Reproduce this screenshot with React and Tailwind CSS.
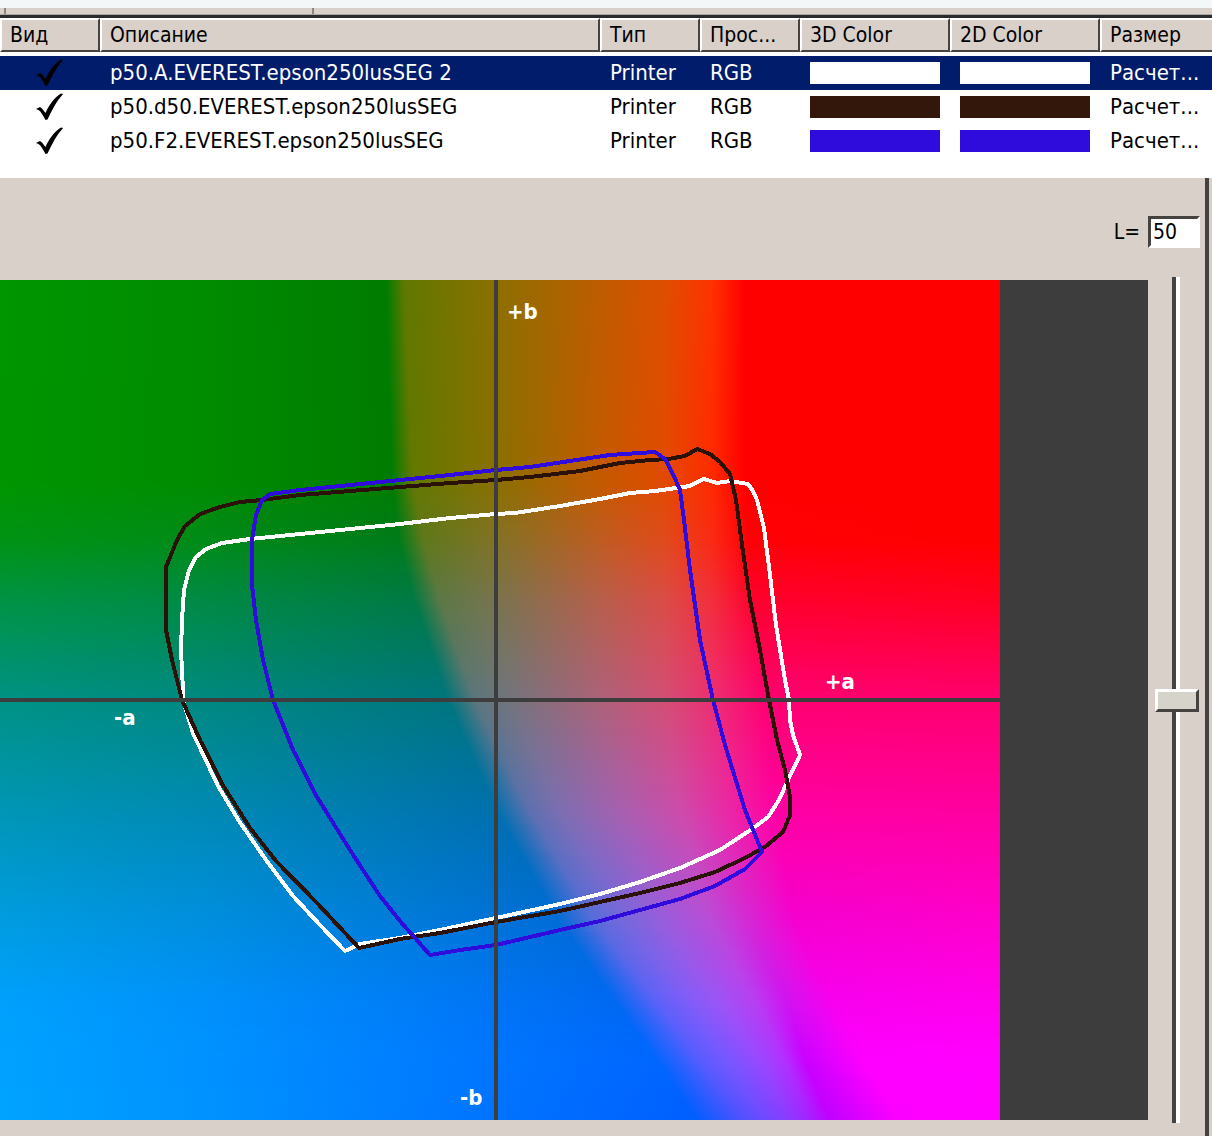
import React, { useState } from 'react';

const profiles = [
  {
    id: 'a',
    name: 'p50.A.EVEREST.epson250lusSEG 2',
    type: 'Printer',
    space: 'RGB',
    swatch: 'bg-white',
    stroke: '#ffffff',
    size: 'Расчет...',
    points:
      '183,700 183,690 181,650 182,620 184,590 189,570 196,557 206,549 222,543 250,539 300,534 350,529 400,524 450,518 496,514 515,513 560,506 600,499 630,493 655,491 690,486 697,482 704,479 717,483 730,481 748,484 753,491 757,500 764,528 770,575 776,625 785,680 789,700 790,720 793,735 800,755 788,780 779,800 768,817 752,829 720,850 680,868 640,882 600,894 560,904 496,918 440,930 400,938 360,944 345,951 320,925 293,896 266,860 239,821 218,786 193,733',
  },
  {
    id: 'd50',
    name: 'p50.d50.EVEREST.epson250lusSEG',
    type: 'Printer',
    space: 'RGB',
    swatch: 'bg-[#33170a]',
    stroke: '#2a1208',
    size: 'Расчет...',
    points:
      '182,700 172,660 166,630 166,567 177,540 185,526 200,514 220,507 240,502 262,500 300,495 350,491 400,487 450,483 496,480 530,477 580,471 620,463 650,460 668,459 685,456 697,449 710,454 720,462 730,474 736,500 742,545 750,600 760,650 768,695 777,740 785,770 790,797 790,815 783,832 766,846 745,858 715,872 680,883 640,893 600,902 560,911 496,922 440,933 400,939 359,948 317,903 276,861 250,828 224,787 200,740',
  },
  {
    id: 'f2',
    name: 'p50.F2.EVEREST.epson250lusSEG',
    type: 'Printer',
    space: 'RGB',
    swatch: 'bg-[#300cdc]',
    stroke: '#300cdc',
    size: 'Расчет...',
    points:
      '273,700 263,660 256,620 252,585 252,540 256,515 262,500 270,494 300,490 350,485 400,480 450,475 496,470 530,467 570,461 610,455 655,452 665,459 673,474 680,490 684,520 690,570 700,640 713,700 725,745 745,810 762,852 745,869 715,886 680,899 640,910 600,921 560,930 496,945 460,950 430,955 400,921 380,896 350,850 317,797 293,750',
  },
];

const columns = [
  { title: 'Вид', width: 'w-[100px]' },
  { title: 'Описание', width: '' },
  { title: 'Тип', width: 'w-[100px]' },
  { title: 'Прос...', width: 'w-[100px]' },
  { title: '3D Color', width: 'w-[150px]' },
  { title: '2D Color', width: 'w-[150px]' },
  { title: 'Размер', width: 'w-[112px]' },
];

// Clipped Lab colours along the b axis: [y, [x, r, g, b], ...]
const field = [
  [280, [0, 0, 150, 0], [200, 0, 140, 0], [386, 0, 124, 0], [404, 96, 120, 0], [496, 140, 112, 0], [600, 190, 92, 0], [665, 222, 78, 0], [712, 255, 50, 0], [745, 255, 0, 0], [1000, 255, 0, 0]],
  [480, [0, 0, 149, 0], [200, 0, 140, 0], [392, 0, 124, 0], [412, 98, 120, 0], [496, 138, 112, 0], [600, 195, 90, 0], [665, 226, 74, 0], [712, 255, 42, 0], [745, 255, 0, 0], [1000, 255, 0, 0]],
  [540, [0, 0, 147, 20], [200, 0, 139, 24], [399, 0, 123, 26], [423, 94, 120, 28], [496, 130, 114, 38], [600, 190, 92, 34], [665, 224, 74, 28], [712, 250, 42, 20], [748, 255, 0, 6], [1000, 255, 0, 0]],
  [600, [0, 0, 147, 68], [200, 0, 138, 68], [414, 0, 122, 68], [440, 92, 120, 70], [496, 120, 116, 78], [600, 182, 95, 75], [665, 218, 76, 70], [712, 242, 46, 60], [754, 255, 0, 46], [1000, 255, 0, 34]],
  [699, [0, 0, 146, 132], [200, 0, 137, 128], [447, 0, 118, 126], [474, 90, 118, 124], [510, 116, 116, 124], [600, 172, 98, 121], [665, 211, 78, 116], [716, 238, 44, 114], [766, 255, 0, 112], [1000, 255, 0, 110]],
  [812, [0, 0, 150, 182], [200, 0, 138, 180], [497, 0, 112, 174], [530, 92, 112, 176], [560, 124, 110, 178], [620, 166, 96, 176], [680, 205, 76, 170], [730, 235, 38, 166], [776, 255, 0, 164], [1000, 255, 0, 160]],
  [920, [0, 0, 156, 224], [200, 0, 143, 222], [558, 0, 108, 214], [594, 88, 108, 218], [622, 116, 104, 220], [660, 150, 94, 220], [710, 186, 76, 216], [750, 214, 38, 212], [795, 245, 0, 208], [1000, 255, 0, 204]],
  [1000, [0, 0, 160, 252], [200, 0, 145, 251], [614, 0, 105, 242], [655, 92, 98, 248], [690, 130, 92, 248], [720, 158, 84, 245], [755, 184, 62, 242], [786, 208, 20, 240], [830, 248, 0, 238], [1000, 255, 0, 236]],
  [1060, [0, 0, 162, 255], [200, 0, 146, 255], [656, 0, 102, 255], [700, 88, 92, 255], [725, 116, 88, 255], [760, 153, 72, 255], [785, 178, 48, 255], [805, 202, 0, 255], [862, 254, 0, 255], [1000, 255, 0, 255]],
  [1120, [0, 0, 163, 255], [200, 0, 147, 255], [696, 0, 94, 255], [740, 75, 82, 255], [765, 110, 74, 255], [790, 140, 58, 255], [810, 165, 34, 255], [830, 192, 0, 255], [900, 252, 0, 255], [1000, 255, 0, 255]],
];

const STRIP = 4;

function stopsAt(y) {
  let i = 0;
  while (i < field.length - 2 && field[i + 1][0] < y) i++;
  const [y0, ...from] = field[i];
  const [y1, ...to] = field[i + 1];
  const t = (y - y0) / (y1 - y0);
  return from.map((stop, s) => stop.map((v, c) => v + (to[s][c] - v) * t));
}

const strips = [];
for (let y = 280; y < 1120; y += STRIP) {
  strips.push({ y, stops: stopsAt(y + STRIP / 2) });
}

function CheckMark() {
  return (
    <svg viewBox="0 0 28 28" className="hidden h-7 w-7 peer-checked:block" aria-hidden="true">
      <path d="M0 16 L4 14 L6 15.5 L9.5 20 C13 12 18 5 25 0.5 L27 1 C21 8 17 15 11.5 26.5 L9.5 27 C7 22.5 5 18.5 2.5 17 Z" fill="#000" />
    </svg>
  );
}

function ProfileTable({ visible, onToggle, selected, onSelect }) {
  return (
    <table className="w-full table-fixed border-separate border-spacing-0">
      <thead className="text-[21px]">
        <tr>
          {columns.map((col) => (
            <th
              key={col.title}
              className={`h-[34px] overflow-hidden border-t-2 border-r-2 border-b-2 border-l-2 border-t-white border-r-[#45423f] border-b-[#45423f] border-l-white bg-[#d8d0c9] p-0 pl-2 text-left font-normal whitespace-nowrap last:border-r-0 ${col.width}`}
            >
              {col.title}
            </th>
          ))}
        </tr>
      </thead>
      <tbody className="text-[22px] before:block before:h-1">
        {profiles.map((p) => (
          <tr
            key={p.id}
            onClick={() => onSelect(p.id)}
            className={`h-[34px] ${selected === p.id ? 'bg-[#001c6b] text-white' : 'text-black'}`}
          >
            <td className="p-0">
              <label className="flex h-7 justify-center">
                <input
                  type="checkbox"
                  aria-label={p.name}
                  checked={visible.includes(p.id)}
                  onChange={() => onToggle(p.id)}
                  className="peer sr-only"
                />
                <CheckMark />
              </label>
            </td>
            <td className="overflow-hidden p-0 pl-[10px] whitespace-nowrap">{p.name}</td>
            <td className="p-0 pl-[10px]">{p.type}</td>
            <td className="p-0 pl-[10px]">{p.space}</td>
            <td className="px-[10px] py-0">
              <div className={`h-[22px] ${p.swatch}`} />
            </td>
            <td className="px-[10px] py-0">
              <div className={`h-[22px] ${p.swatch}`} />
            </td>
            <td className="overflow-hidden p-0 pl-[10px] whitespace-nowrap">{p.size}</td>
          </tr>
        ))}
      </tbody>
    </table>
  );
}

function GamutPlot({ visible }) {
  return (
    <svg viewBox="0 280 1148 840" className="block min-w-0 flex-1 bg-[#3d3d3d]">
      <defs>
        {strips.map((s) => (
          <linearGradient key={s.y} id={`lab-${s.y}`} gradientUnits="userSpaceOnUse" x1="0" x2="1000" y1="0" y2="0">
            {s.stops.map(([x, r, g, b], i) => (
              <stop
                key={i}
                offset={x / 1000}
                stopColor={`rgb(${Math.round(r)} ${Math.round(g)} ${Math.round(b)})`}
              />
            ))}
          </linearGradient>
        ))}
      </defs>

      <g shapeRendering="crispEdges">
        {strips.map((s) => (
          <rect key={s.y} x="0" y={s.y} width="1000" height={STRIP} fill={`url(#lab-${s.y})`} />
        ))}
        {profiles
          .filter((p) => visible.includes(p.id))
          .map((p) => (
            <polygon key={p.id} points={p.points} fill="none" stroke={p.stroke} strokeWidth="4" strokeLinejoin="round" />
          ))}
        <path d="M496 280V1120M0 700H1000" stroke="#3d3d3d" strokeWidth="4" />
      </g>

      <g fill="#fff" fontSize="22" fontWeight="bold" className="font-['DejaVu_Sans_Condensed','DejaVu_Sans',sans-serif]">
        <text x="507" y="319">+b</text>
        <text x="825" y="689">+a</text>
        <text x="114" y="725">-a</text>
        <text x="460" y="1105">-b</text>
      </g>
    </svg>
  );
}

export function App() {
  const [lightness, setLightness] = useState(50);
  const [selected, setSelected] = useState('a');
  const [visible, setVisible] = useState(['a', 'd50', 'f2']);

  const toggle = (id) => {
    setVisible((prev) => (prev.includes(id) ? prev.filter((v) => v !== id) : [...prev, id]));
  };

  return (
    <div className="flex min-h-screen flex-col bg-[#d8d0c9] font-['DejaVu_Sans_Condensed','DejaVu_Sans',sans-serif] text-[21px] leading-6 text-black">
      <div className="h-2 bg-[#f3f7f8]" />
      <div className="flex h-[7px] border-b border-[#aaa69f]">
        <span className="w-[6px] border-r-2 border-[#8a8680]" />
        <span className="w-[308px] border-r-2 border-[#8a8680]" />
      </div>

      <div className="border-t-3 border-[#2b2b2b] bg-white pb-5">
        <ProfileTable visible={visible} onToggle={toggle} selected={selected} onSelect={setSelected} />
      </div>

      <div className="mr-[3px] flex flex-1 flex-col border-r-4 border-[#45423f]">
        <div className="flex items-center justify-end gap-2 pt-[38px] pr-[5px] pb-8">
          <label htmlFor="lightness">L=</label>
          <input
            id="lightness"
            value={lightness}
            onChange={(e) => setLightness(Number(e.target.value) || 0)}
            className="h-8 w-[52px] border-3 border-t-[#45423f] border-r-white border-b-white border-l-[#45423f] bg-white pl-[2px] outline-none"
          />
        </div>
        <div className="flex">
          <GamutPlot visible={visible} />
          <input
            type="range"
            aria-label="L"
            min="0"
            max="100"
            value={lightness}
            onChange={(e) => setLightness(Number(e.target.value))}
            className="mr-[6px] -mb-[3px] -mt-[3px] ml-[7px] w-11 appearance-none bg-[linear-gradient(to_right,transparent_17px,#45423f_17px,#45423f_21px,#fff_21px,#fff_25px,transparent_25px)] [direction:rtl] [writing-mode:vertical-lr] [&::-webkit-slider-thumb]:h-[23px] [&::-webkit-slider-thumb]:w-11 [&::-webkit-slider-thumb]:appearance-none [&::-webkit-slider-thumb]:border-3 [&::-webkit-slider-thumb]:border-t-white [&::-webkit-slider-thumb]:border-r-[#45423f] [&::-webkit-slider-thumb]:border-b-[#45423f] [&::-webkit-slider-thumb]:border-l-white [&::-webkit-slider-thumb]:bg-[#d6d3ca]"
          />
        </div>
      </div>
    </div>
  );
}

export default App;
